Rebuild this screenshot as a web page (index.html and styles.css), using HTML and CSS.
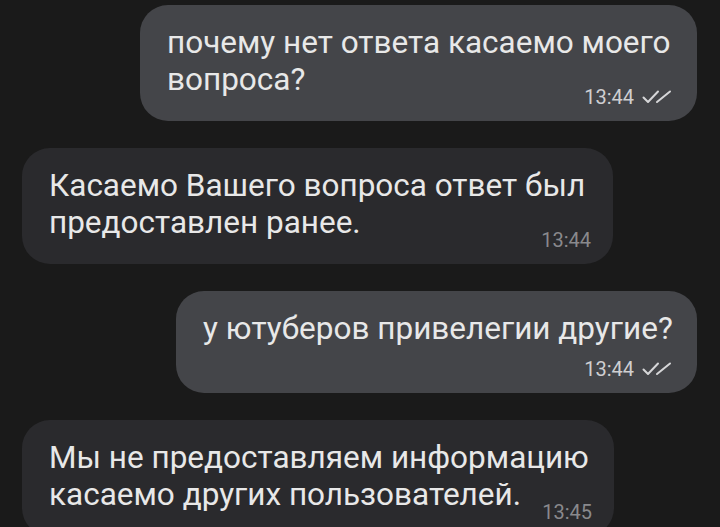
FILE: index.html
```html
<!DOCTYPE html>
<html lang="ru">
<head>
<meta charset="utf-8">
<link rel="stylesheet" href="styles.css">
</head>
<body>
<div class="chat">
  <div class="msg out b1">
    <p class="text">почему нет ответа касаемо моего<br>вопроса?<span class="meta"><span class="time">13:44</span><svg class="ticks" viewBox="0 0 30 14" width="30" height="14"><path d="M1.5 7.5 L6 12 L16 1.5" /><path d="M15 12 L28 1.5" /></svg></span></p>
  </div>
  <div class="msg in b2">
    <p class="text">Касаемо Вашего вопроса ответ был<br>предоставлен ранее.<span class="meta"><span class="time">13:44</span></span></p>
  </div>
  <div class="msg out b3">
    <p class="text">у ютуберов привелегии другие?</p>
    <span class="meta"><span class="time">13:44</span><svg class="ticks" viewBox="0 0 30 14" width="30" height="14"><path d="M1.5 7.5 L6 12 L16 1.5" /><path d="M15 12 L28 1.5" /></svg></span>
  </div>
  <div class="msg in b4">
    <p class="text">Мы не предоставляем информацию<br>касаемо других пользователей.<span class="meta"><span class="time">13:45</span></span></p>
  </div>
</div>
</body>
</html>
```
FILE: styles.css
```css
html, body {
  margin: 0;
  padding: 0;
  background: #1a1a1a;
  height: 100%;
  overflow: hidden;
}
.chat {
  display: flex;
  flex-direction: column;
  gap: 27px;
  padding: 5px 23px 0 22px;
  font-family: Roboto, "Noto Sans", sans-serif;
}
.msg {
  border-radius: 28px;
  padding: 19px 22px 12px 27px;
  display: flow-root;
  box-sizing: border-box;
}
.out {
  align-self: flex-end;
  background: #444549;
  padding-right: 25px;
}
.in {
  align-self: flex-start;
  background: #2a2a2d;
}
.b1 { width: 557px; }
.b2 { width: 591px; }
.b3 { width: 521px; }
.b4 { width: 592px; }
.text {
  margin: 0;
  color: #e8e8e8;
  font-size: 31.5px;
  line-height: 37px;
  white-space: nowrap;
}
.meta {
  float: right;
  margin-left: 14px;
  margin-top: 24px;
  display: flex;
  align-items: center;
  gap: 8px;
  font-size: 20px;
  line-height: 24px;
  white-space: nowrap;
}
.out .meta { color: #cfcfd1; }
.in .meta { color: #89898c; }
.ticks {
  fill: none;
  stroke: #d6d6d8;
  stroke-width: 2;
  stroke-linecap: round;
  stroke-linejoin: round;
}
.b3 .meta { margin-top: 10px; }
```
